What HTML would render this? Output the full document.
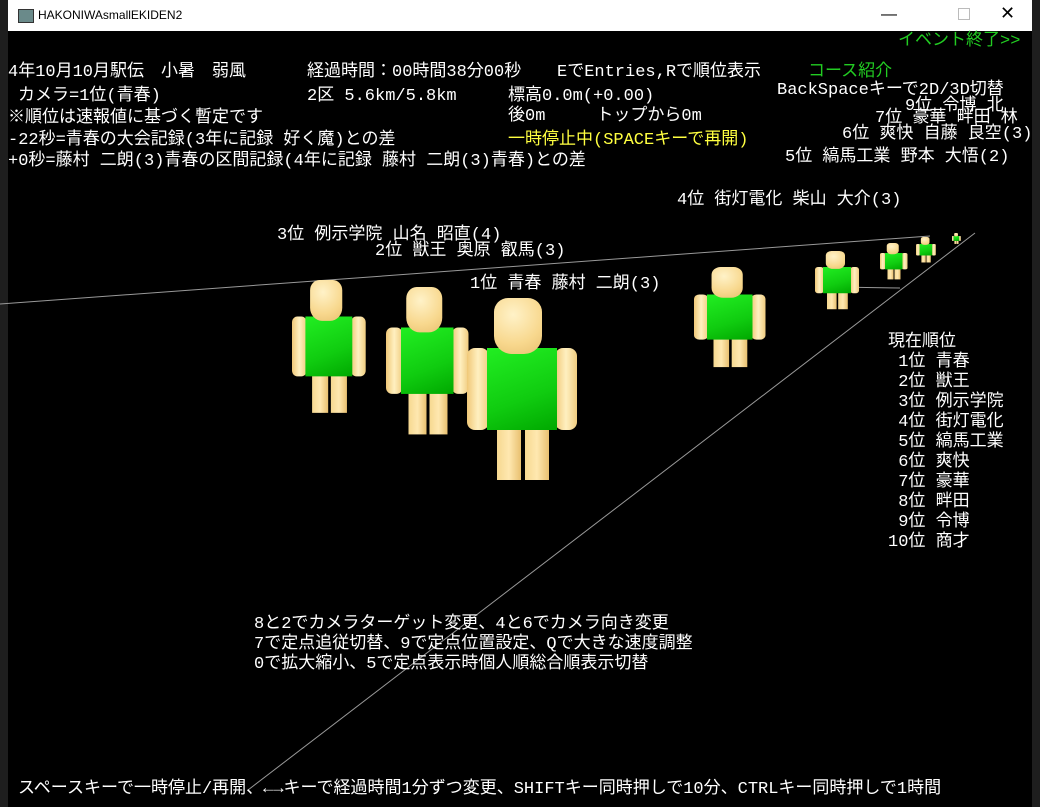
<!DOCTYPE html><html><head><meta charset="utf-8"><style>
body{margin:0;width:1040px;height:807px;background:#1e1e1e;overflow:hidden;position:relative;font-family:"Liberation Mono","Noto Sans CJK JP",monospace}
#win{position:absolute;left:8px;top:0;width:1024px;height:807px;background:#000}
#tb{position:absolute;left:0;top:0;width:1024px;height:31px;background:#fff;font-family:"Liberation Sans",sans-serif;font-size:12px;color:#000}
.t{position:absolute;color:#fff;font-size:17px;white-space:pre;line-height:20px}
.g{color:#22cc22}.y{color:#ffff40}
.f{position:absolute;transform-origin:0 0;width:110px;height:180px}
.f div{position:absolute}
.hd{left:27px;top:0;width:48px;height:56px;border-radius:14px 14px 18px 18px;background:radial-gradient(circle at 40% 30%,#fff2c8,#f8d88e 60%,#e8c070)}
.ar{top:50px;width:22px;height:82px;border-radius:8px;background:linear-gradient(90deg,#f0c878,#fff0c0,#f0cc80)}
.lg{top:128px;width:24px;height:54px;background:linear-gradient(90deg,#f6d890,#ffe8b0,#e8c070)}
.to{left:20px;top:50px;width:70px;height:82px;background:linear-gradient(160deg,#22ee22,#10cc10 60%,#00a800)}
</style></head><body>
<div id="win">
<div id="tb"><span style="position:absolute;left:10px;top:9px;width:14px;height:12px;background:#6a8a8a;border:1px solid #333"></span><span style="position:absolute;left:30px;top:8px">HAKONIWAsmallEKIDEN2</span>
<span style="position:absolute;left:873px;top:6px;font-size:16px">—</span><span style="position:absolute;left:950px;top:8px;width:10px;height:10px;border:1px solid #bbb"></span><span style="position:absolute;left:992px;top:3px;font-size:18px">✕</span></div>
<svg style="position:absolute;left:-8px;top:0" width="1040" height="807"><g stroke="#999" stroke-width="1"><line x1="0" y1="304" x2="930" y2="236"/><line x1="248" y1="790" x2="975" y2="233"/><line x1="835" y1="287" x2="900" y2="288"/></g></svg>
</div>
<div class="t g" style="left:898px;top:32px">イベント終了>></div>
<div class="t" style="left:8px;top:63px">4年10月10月駅伝　小暑　弱風</div>
<div class="t" style="left:307px;top:63px">経過時間：00時間38分00秒</div>
<div class="t" style="left:557px;top:63px">EでEntries,Rで順位表示</div>
<div class="t g" style="left:808px;top:63px">コース紹介</div>
<div class="t" style="left:18px;top:87px">カメラ=1位(青春)</div>
<div class="t" style="left:307px;top:87px">2区 5.6km/5.8km</div>
<div class="t" style="left:508px;top:87px">標高0.0m(+0.00)</div>
<div class="t" style="left:777px;top:81px">BackSpaceキーで2D/3D切替</div>
<div class="t" style="left:905px;top:97px">9位 令博 北</div>
<div class="t" style="left:875px;top:109px">7位 豪華 畔田 林</div>
<div class="t" style="left:8px;top:109px">※順位は速報値に基づく暫定です</div>
<div class="t" style="left:508px;top:107px">後0m　　　トップから0m</div>
<div class="t" style="left:8px;top:131px">-22秒=青春の大会記録(3年に記録 好く魔)との差</div>
<div class="t y" style="left:508px;top:131px">一時停止中(SPACEキーで再開)</div>
<div class="t" style="left:842px;top:125px">6位 爽快 自藤 良空(3)</div>
<div class="t" style="left:8px;top:152px">+0秒=藤村 二朗(3)青春の区間記録(4年に記録 藤村 二朗(3)青春)との差</div>
<div class="t" style="left:785px;top:148px">5位 縞馬工業 野本 大悟(2)</div>
<div class="t" style="left:677px;top:191px">4位 街灯電化 柴山 大介(3)</div>
<div class="t" style="left:277px;top:226px">3位 例示学院 山名 昭直(4)</div>
<div class="t" style="left:375px;top:242px">2位 獣王 奥原 叡馬(3)</div>
<div class="t" style="left:470px;top:275px">1位 青春 藤村 二朗(3)</div>
<div class="t" style="left:888px;top:333px">現在順位
 1位 青春
 2位 獣王
 3位 例示学院
 4位 街灯電化
 5位 縞馬工業
 6位 爽快
 7位 豪華
 8位 畔田
 9位 令博
10位 商才</div>
<div class="t" style="left:254px;top:615px;line-height:20px">8と2でカメラターゲット変更、4と6でカメラ向き変更
7で定点追従切替、9で定点位置設定、Qで大きな速度調整
0で拡大縮小、5で定点表示時個人順総合順表示切替</div>
<div class="t" style="left:18px;top:780px">スペースキーで一時停止/再開、←→キーで経過時間1分ずつ変更、SHIFTキー同時押しで10分、CTRLキー同時押しで1時間</div>

<div class="f" style="left:292px;top:280px;transform:scale(.67,.73)"><div class="ar" style="left:0"></div><div class="ar" style="left:88px"></div><div class="lg" style="left:30px"></div><div class="lg" style="left:58px"></div><div class="to"></div><div class="hd"></div></div>
<div class="f" style="left:386px;top:287px;transform:scale(.75,.81)"><div class="ar" style="left:0"></div><div class="ar" style="left:88px"></div><div class="lg" style="left:30px"></div><div class="lg" style="left:58px"></div><div class="to"></div><div class="hd"></div></div>
<div class="f" style="left:467px;top:298px;transform:scale(1,1)"><div class="ar" style="left:0"></div><div class="ar" style="left:88px"></div><div class="lg" style="left:30px"></div><div class="lg" style="left:58px"></div><div class="to"></div><div class="hd"></div></div>
<div class="f" style="left:694px;top:267px;transform:scale(.65,.55)"><div class="ar" style="left:0"></div><div class="ar" style="left:88px"></div><div class="lg" style="left:30px"></div><div class="lg" style="left:58px"></div><div class="to"></div><div class="hd"></div></div>
<div class="f" style="left:815px;top:251px;transform:scale(.4,.32)"><div class="ar" style="left:0"></div><div class="ar" style="left:88px"></div><div class="lg" style="left:30px"></div><div class="lg" style="left:58px"></div><div class="to"></div><div class="hd"></div></div>
<div class="f" style="left:880px;top:243px;transform:scale(.25,.2)"><div class="ar" style="left:0"></div><div class="ar" style="left:88px"></div><div class="lg" style="left:30px"></div><div class="lg" style="left:58px"></div><div class="to"></div><div class="hd"></div></div>
<div class="f" style="left:916px;top:237px;transform:scale(.18,.14)"><div class="ar" style="left:0"></div><div class="ar" style="left:88px"></div><div class="lg" style="left:30px"></div><div class="lg" style="left:58px"></div><div class="to"></div><div class="hd"></div></div>
<div class="f" style="left:952px;top:233px;transform:scale(.08,.06)"><div class="ar" style="left:0"></div><div class="ar" style="left:88px"></div><div class="lg" style="left:30px"></div><div class="lg" style="left:58px"></div><div class="to"></div><div class="hd"></div></div>
</body></html>
